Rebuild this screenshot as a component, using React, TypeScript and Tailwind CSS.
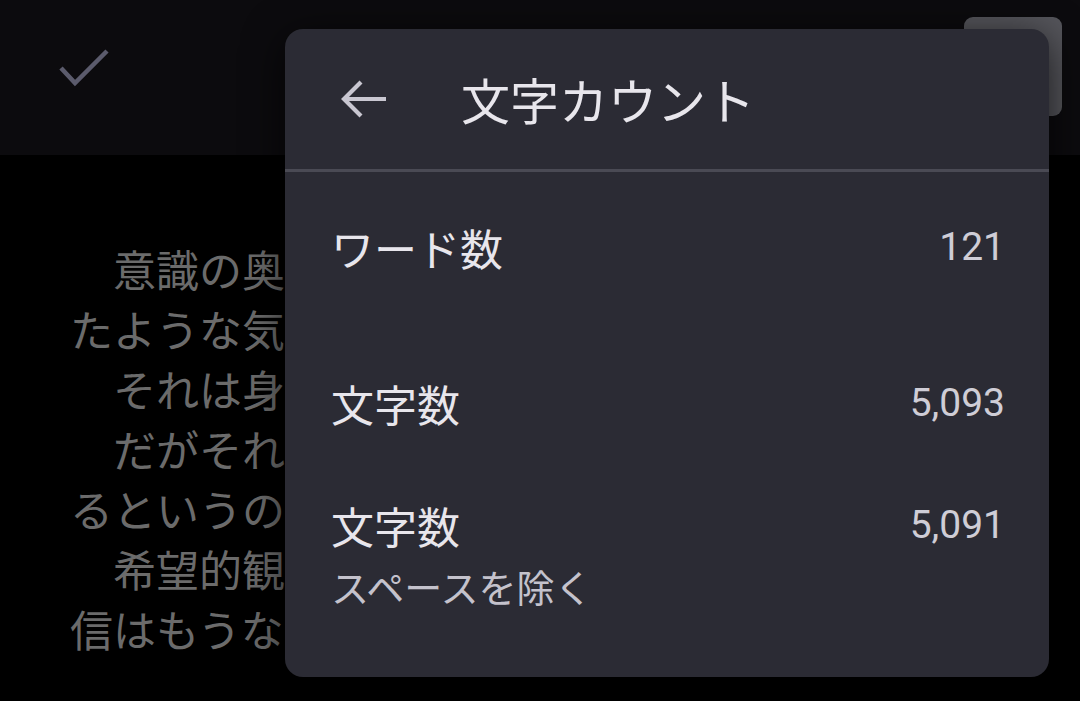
import React from "react";

const lines = [
  "　意識の奥底で何かが動き出し",
  "たような気がした。",
  "　それは身体の内側から",
  "　だがそれが本当に希望であ",
  "るというのなら、",
  "　希望的観測にすぎない。",
  "信はもうない。",
];

const rows = [
  { label: "ワード数", value: "121", sub: null, mt: "mt-[50px]" },
  { label: "文字数", value: "5,093", sub: null, mt: "mt-[106px]" },
  { label: "文字数", value: "5,091", sub: "スペースを除く", mt: "mt-[72px]" },
];

const jp = "font-['Noto_Sans_CJK_JP',sans-serif]";

export default function App() {
  return (
    <div className={`relative w-[1080px] h-[701px] overflow-hidden bg-black ${jp}`}>
      {/* top bar */}
      <div className="h-[155px] bg-[#0c0b0e] flex items-start justify-between">
        <svg width="52" height="42" viewBox="0 0 52 42" className="ml-[58px] mt-[47px]">
          <polyline
            points="3,21 17,36 49,4"
            fill="none"
            stroke="#5b5b6c"
            strokeWidth="4.5"
          />
        </svg>
        <div className="mt-[17px] mr-[18px] w-[98px] h-[99px] rounded-[9px] bg-[#55555b]" />
      </div>

      {/* document text behind the panel */}
      <div className="pt-[83px] pl-[70px] text-[43px] leading-[60px] text-[#6b6b6b] whitespace-nowrap">
        {lines.map((l, i) => (
          <div key={i}>{l}</div>
        ))}
      </div>

      {/* word count panel */}
      <div className="absolute left-[285px] top-[29px] w-[764px] h-[648px] rounded-[18px] bg-[#2b2b34] shadow-[0_8px_40px_rgba(0,0,0,0.7)]">
        <div className="h-[140px] flex items-center pl-[55px]">
          <svg width="48" height="40" viewBox="0 0 48 40">
            <path
              d="M46 20H4M21 3L4 20L21 37"
              fill="none"
              stroke="#c9c7d1"
              strokeWidth="4.2"
            />
          </svg>
          <span className="ml-[73px] text-[49px] leading-[56px] text-[#e8e6ec]">文字カウント</span>
        </div>
        <div className="h-[3px] bg-[#4a4a54]" />

        <div className="pl-[46px] pr-[44px]">
          {rows.map((r, i) => (
            <div key={i} className={r.mt}>
              <div className="flex items-center justify-between h-[50px]">
                <span className="text-[43px] leading-[50px] text-[#e8e6ec]">{r.label}</span>
                <span className="font-['Roboto',sans-serif] text-[39px] leading-[50px] text-[#cfcdd6]">
                  {r.value}
                </span>
              </div>
              {r.sub && (
                <div className="mt-[14px] text-[38px] leading-[44px] text-[#c4c2cc]">{r.sub}</div>
              )}
            </div>
          ))}
        </div>
      </div>
    </div>
  );
}
